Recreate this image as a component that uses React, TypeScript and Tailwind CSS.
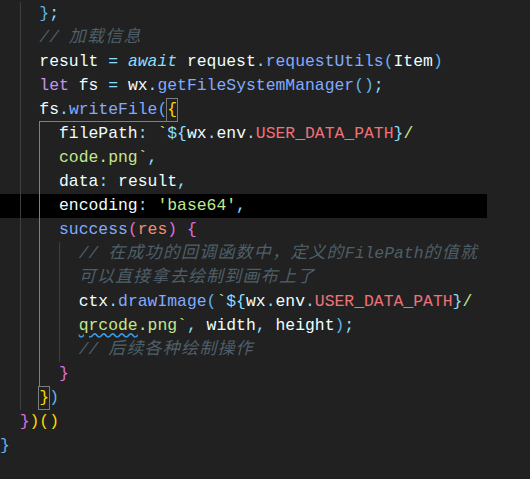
type Tok = [string, string];

interface Line {
  indent: number;
  guides?: string[];
  toks?: Tok[];
  cmt?: string;
  hl?: boolean;
  under?: boolean;
}

const w = "text-[#eeffff]";
const c = "text-[#89ddff]";
const f = "text-[#82aaff]";
const s = "text-[#c3e88d]";
const k = "text-[#c792ea]";
const r = "text-[#f07178]";
const p = "text-[#f78c6c]";
const gold = "text-[#ffd700]";
const pink = "text-[#da70d6]";
const blue = "text-[#5fb4ea]";
const box =
  "inline-block h-[22px] leading-[22px] align-top relative top-px outline outline-1 outline-[#7d7d7d]";
const wavy = "underline decoration-wavy decoration-[#3c9be8] underline-offset-2";

// guide colour for each indent step (index 0 never gets one)
const G = "border-[#3e3e3e]";
const Y = "border-[#9c8520]";

const lines: Line[] = [
  { indent: 4, guides: ["", G], toks: [["}", blue], [";", c]] },
  { indent: 4, guides: ["", G], cmt: "// 加载信息" },
  {
    indent: 4,
    guides: ["", G],
    toks: [
      ["result ", w],
      ["= ", c],
      ["await", c + " italic"],
      [" request", w],
      [".", c],
      ["requestUtils", f],
      ["(", blue],
      ["Item", w],
      [")", blue],
    ],
  },
  {
    indent: 4,
    guides: ["", G],
    toks: [
      ["let", k],
      [" fs ", w],
      ["= ", c],
      ["wx", w],
      [".", c],
      ["getFileSystemManager", f],
      ["()", blue],
      [";", c],
    ],
  },
  {
    indent: 4,
    guides: ["", G],
    under: true,
    toks: [
      ["fs", w],
      [".", c],
      ["writeFile", f],
      ["(", blue],
      ["{", gold + " " + box],
    ],
  },
  {
    indent: 6,
    guides: ["", G, Y],
    toks: [
      ["filePath", w],
      [": ", c],
      ["`", s],
      ["${", c],
      ["wx", w],
      [".", c],
      ["env", w],
      [".", c],
      ["USER_DATA_PATH", r],
      ["}", c],
      ["/", s],
    ],
  },
  { indent: 6, guides: ["", G, Y], toks: [["code.png`", s], [",", c]] },
  { indent: 6, guides: ["", G, Y], toks: [["data", w], [": ", c], ["result", w], [",", c]] },
  {
    indent: 6,
    guides: ["", G, Y],
    hl: true,
    toks: [["encoding", w], [": ", c], ["'base64'", s], [",", c]],
  },
  {
    indent: 6,
    guides: ["", G, Y],
    toks: [
      ["success", f],
      ["(", pink],
      ["res", p],
      [")", pink],
      [" {", pink],
    ],
  },
  { indent: 8, guides: ["", G, Y, G], cmt: "// 在成功的回调函数中，定义的FilePath的值就" },
  { indent: 8, guides: ["", G, Y, G], cmt: "可以直接拿去绘制到画布上了" },
  {
    indent: 8,
    guides: ["", G, Y, G],
    toks: [
      ["ctx", w],
      [".", c],
      ["drawImage", f],
      ["(", blue],
      ["`", s],
      ["${", c],
      ["wx", w],
      [".", c],
      ["env", w],
      [".", c],
      ["USER_DATA_PATH", r],
      ["}", c],
      ["/", s],
    ],
  },
  {
    indent: 8,
    guides: ["", G, Y, G],
    toks: [
      ["qrcode", s + " " + wavy],
      [".png`", s],
      [", ", c],
      ["width", w],
      [", ", c],
      ["height", w],
      [")", blue],
      [";", c],
    ],
  },
  { indent: 8, guides: ["", G, Y, G], cmt: "// 后续各种绘制操作" },
  { indent: 6, guides: ["", G, Y], toks: [["}", pink]] },
  { indent: 4, guides: ["", G], toks: [["}", gold + " " + box], [")", blue]] },
  {
    indent: 2,
    toks: [
      ["}", pink],
      [")", gold],
      ["(", gold],
      [")", gold],
    ],
  },
  { indent: 0, toks: [["}", blue]] },
];

const CJK = /[\u3000-\u9fff\uff00-\uffef]/;

// CJK runs get a wider box so they line up like the editor's font
function Comment({ text }: { text: string }) {
  const runs = text.match(/[\u3000-\u9fff\uff00-\uffef]+|[^\u3000-\u9fff\uff00-\uffef]+/g) ?? [];
  return (
    <span className="italic text-[#4e5f68]">
      {runs.map((run, i) =>
        CJK.test(run) ? (
          <span key={i} className="text-[17px] tracking-[1.2px]">
            {run}
          </span>
        ) : (
          <span key={i}>{run}</span>
        )
      )}
    </span>
  );
}

function CodeLine({ line }: { line: Line }) {
  const steps = Array.from({ length: line.indent / 2 }, (_, i) => line.guides?.[i] ?? "");
  return (
    <div className={"flex h-[24px] leading-[24px] whitespace-pre " + (line.hl ? "bg-black w-[487px]" : "")}>
      {steps.map((g, i) => (
        <span key={i} className={"w-[2ch] shrink-0 h-full " + (g ? "border-l " + g : "")} />
      ))}
      <span className={"h-full " + (line.under ? "border-b " + Y : "")}>
        {line.cmt ? (
          <Comment text={line.cmt} />
        ) : (
          line.toks?.map(([t, cls], j) => (
            <span key={j} className={cls}>
              {t}
            </span>
          ))
        )}
      </span>
    </div>
  );
}

export default function App() {
  return (
    <div className="w-[530px] h-[479px] overflow-hidden bg-[#212121] pt-[2px] font-[family-name:Liberation_Mono,Noto_Sans_CJK_SC,monospace] text-[16.4px]">
      {lines.map((line, i) => (
        <CodeLine key={i} line={line} />
      ))}
    </div>
  );
}
